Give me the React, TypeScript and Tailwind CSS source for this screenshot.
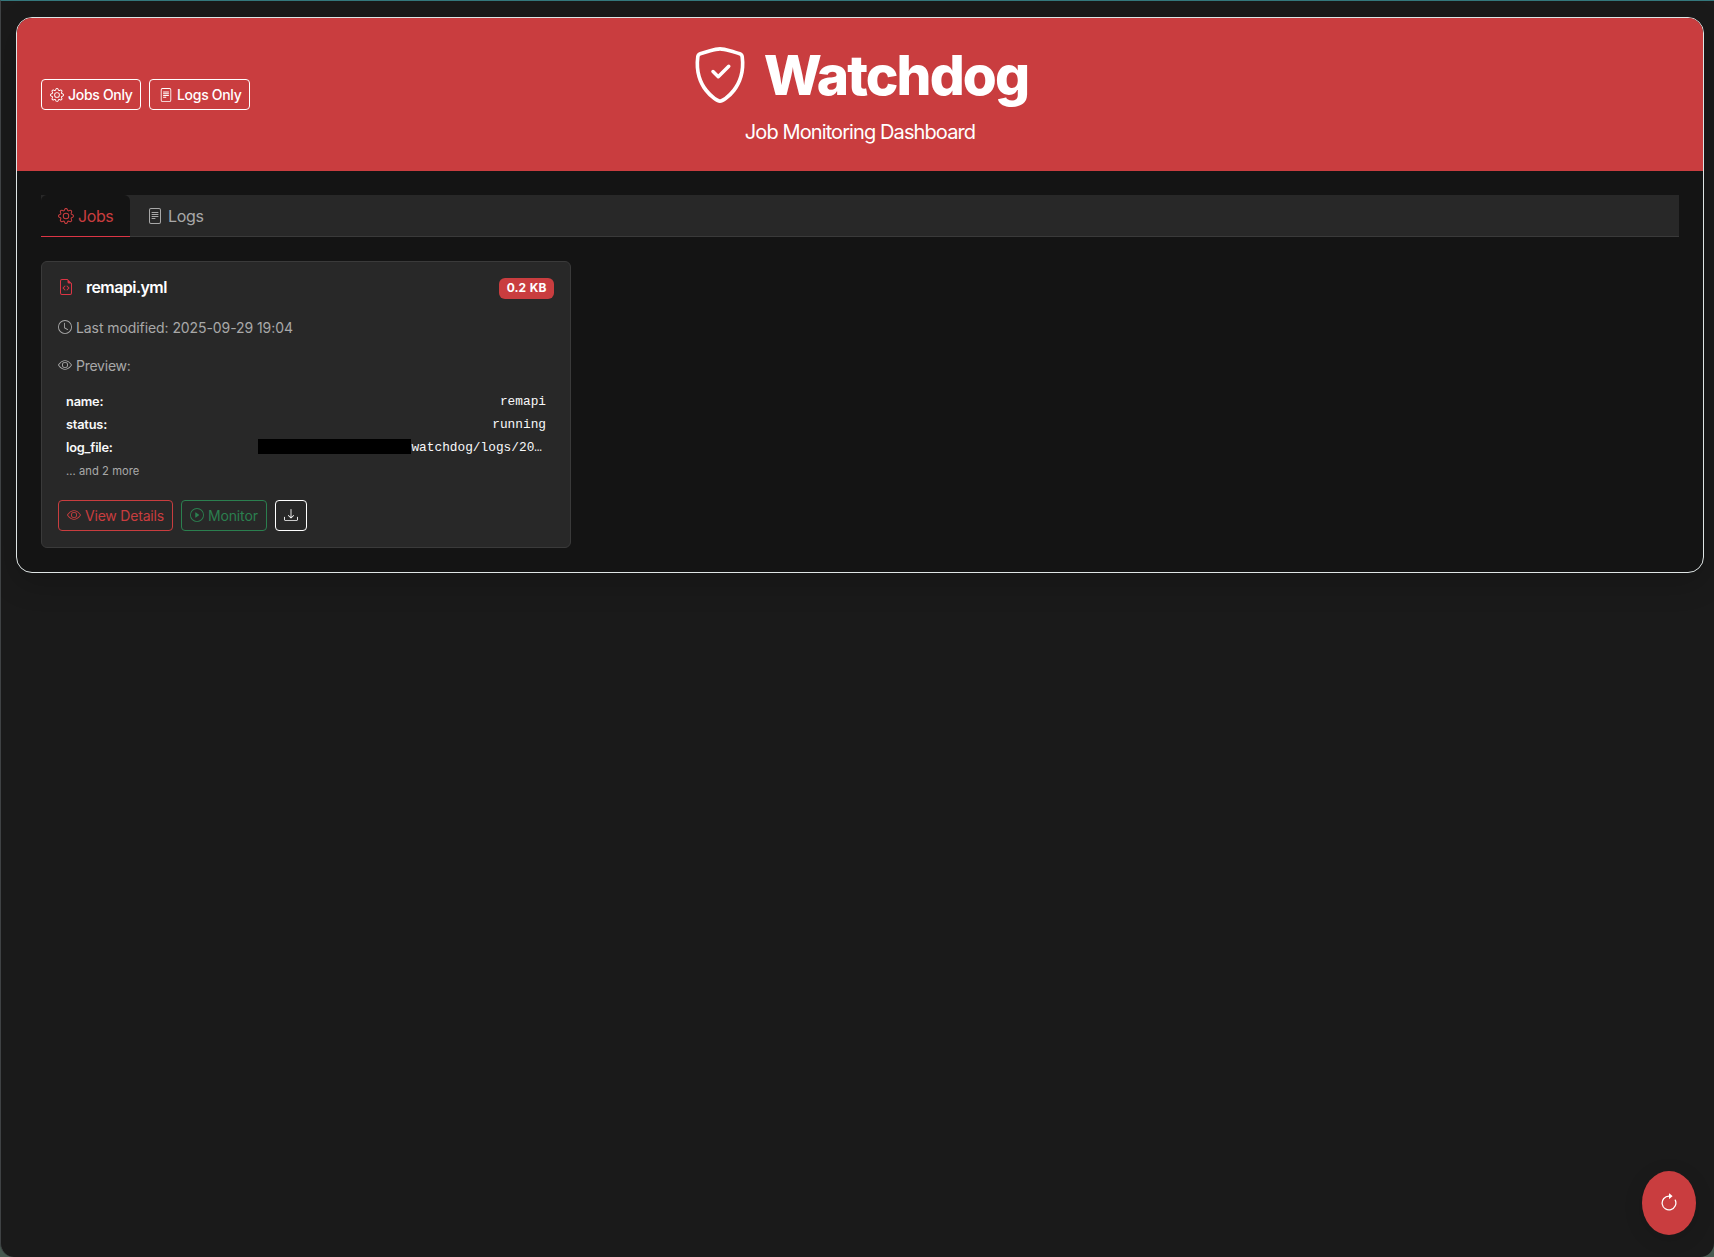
import type { ReactNode } from "react";
import {
  BsArrowClockwise,
  BsClock,
  BsDownload,
  BsEye,
  BsFileEarmarkCode,
  BsFileText,
  BsGear,
  BsPlayCircle,
  BsShieldCheck,
} from "react-icons/bs";

function Button({ className, children }: { className: string; children: ReactNode }) {
  return (
    <button className={`flex h-[31px] shrink-0 items-center rounded border text-sm leading-[21px] whitespace-nowrap [&>svg]:shrink-0 ${className}`}>
      {children}
    </button>
  );
}

function Row({ label, children }: { label: string; children: ReactNode }) {
  return (
    <div className="flex h-[23px] items-center justify-between text-[12.8px]">
      <span className="font-semibold tracking-[-0.2px] text-[#f8f9fa]">{label}</span>
      <span className="flex items-center font-['Liberation_Mono',monospace] text-[#f8f9fa]">{children}</span>
    </div>
  );
}

function JobCard() {
  return (
    <article className="flex h-[287px] w-[530px] flex-col rounded-md border border-[#3a3a3a] bg-[#282828] px-4 pt-4">
      <div className="flex h-[21px] items-center justify-between">
        <h2 className="flex items-center text-base font-semibold tracking-[-0.55px] text-white">
          <BsFileEarmarkCode className="mr-3 size-4 -translate-y-0.5 text-[#dc3545]" />
          <span className="-translate-y-0.5">remapi.yml</span>
        </h2>
        <span className="flex h-[21px] w-[55px] items-center justify-center rounded-md bg-[#c93d3f] pb-[2px] text-xs font-bold [word-spacing:1px] text-white">
          0.2 KB
        </span>
      </div>
      <p className="mt-[18px] flex h-[21px] items-center text-sm tracking-[-0.08px] text-[#a8a8a8]">
        <BsClock className="mr-1 size-3.5 -translate-y-px" />
        Last modified: 2025-09-29 19:04
      </p>
      <p className="mt-[17px] flex h-[21px] items-center text-sm tracking-[-0.25px] text-[#a8a8a8]">
        <BsEye className="mr-1 size-3.5 -translate-y-px" />
        Preview:
      </p>
      <div className="mt-[14px] px-2">
        <Row label="name:">remapi</Row>
        <Row label="status:">running</Row>
        <Row label="log_file:">
          <span className="h-[15px] w-[153px] -translate-y-px bg-black" />
          <span className="mr-1">watchdog/logs/20…</span>
        </Row>
        <p className="flex h-6 items-center text-[11.2px] tracking-[0.05px] text-[#a8a8a8]">... and 2 more</p>
      </div>
      <div className="mt-[17px] flex gap-2">
        <Button className="w-[115px] border-[#c93d3f] pl-2 tracking-[-0.2px] text-[#c93d3f]">
          <BsEye className="mr-1 size-3.5 -translate-y-px" />
          View Details
        </Button>
        <Button className="w-[86px] border-[#2b7f4f] pl-2 tracking-[-0.15px] text-[#2b7f4f]">
          <BsPlayCircle className="mr-1 size-3.5 -translate-y-px" />
          Monitor
        </Button>
        <Button className="w-8 justify-center border-white text-white">
          <BsDownload className="size-3.5 -translate-y-px" />
        </Button>
      </div>
    </article>
  );
}

export default function App() {
  return (
    <div className="h-[1257px] overflow-hidden bg-[#46584f] font-['Inter',sans-serif]">
      <div className="h-full overflow-hidden rounded-b-[14px] border-t border-l border-t-[#34777c] border-l-[#3f4244] bg-[#1a1a1a] pt-4 pl-[15px]">
        <main className="h-[556px] w-[1688px] overflow-hidden rounded-2xl border border-[#dfe5e5] bg-[#141414] shadow-[0_10px_30px_rgba(0,0,0,0.2)]">
          <header className="grid h-[153px] grid-cols-[1fr_auto_1fr] items-center bg-[#c93d3f] px-6 text-white">
            <div className="flex gap-2">
              <Button className="w-[100px] border-white pl-2 font-medium tracking-[-0.3px]">
                <BsGear className="mr-1 size-3.5" />
                Jobs Only
              </Button>
              <Button className="w-[101px] border-white pl-[9px] font-medium tracking-[-0.3px]">
                <BsFileText className="mr-1 size-3.5" />
                Logs Only
              </Button>
            </div>
            <div className="flex flex-col items-center">
              <h1 className="flex h-[67px] items-center text-[55px] leading-[67px] font-extrabold tracking-[-1.9px]">
                <BsShieldCheck className="mr-4 size-14 -translate-y-px" />
                <span>Watchdog</span>
              </h1>
              <p className="mt-2 text-xl leading-[30px] tracking-[-0.9px]">Job Monitoring Dashboard</p>
            </div>
          </header>
          <div className="p-6">
            <nav className="mb-6 flex h-[42px] border-b border-[#3a3a3a] bg-[#282828]">
              <div className="flex h-[42px] w-[89px] items-center rounded-t-md border-b border-[#dc3545] bg-[#141414] pl-[17px] tracking-[-0.4px] text-[#c93d3f]">
                <BsGear className="mr-1 size-4" />
                Jobs
              </div>
              <div className="flex h-[42px] items-center pl-[17px] tracking-[-0.35px] text-[#a8a8a8]">
                <BsFileText className="mr-[5px] size-4" />
                Logs
              </div>
            </nav>
            <JobCard />
          </div>
        </main>
      </div>
      <button className="fixed right-[18px] bottom-[22px] flex h-16 w-[54px] items-center justify-center rounded-[50%] bg-[#c93d3f] text-white shadow-[0_4px_20px_rgba(0,0,0,0.12)]">
        <BsArrowClockwise className="size-5" />
      </button>
    </div>
  );
}
